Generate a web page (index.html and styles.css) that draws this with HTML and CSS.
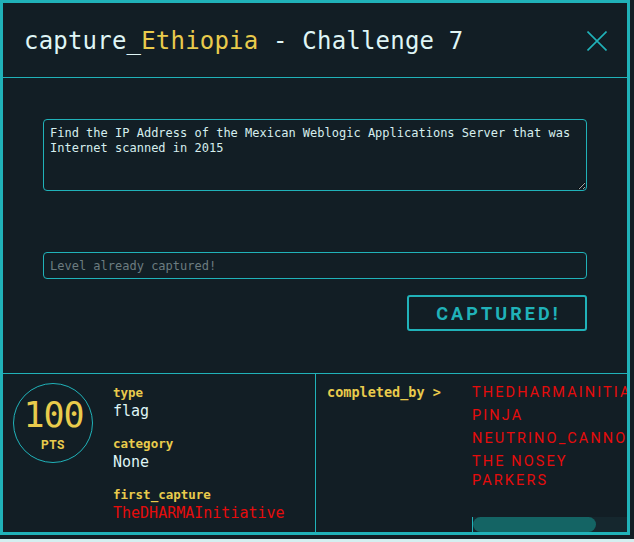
FILE: index.html
```html
<!DOCTYPE html>
<html lang="en">
<head>
    <meta charset="UTF-8">
    <meta name="viewport" content="width=device-width, initial-scale=1.0">
    <title>capture_Ethiopia - Challenge 7</title>
    <link rel="stylesheet" href="styles.css">
</head>
<body>

    <!-- Challenge modal -->
    <div class="modal">
        <div class="modal-header">
            <h1 class="modal-title">capture_<span class="hl">Ethiopia</span> - Challenge 7</h1>
            <button class="close-btn" aria-label="Close">
                <svg width="20" height="20" viewBox="0 0 20 20">
                    <path d="M0.5 0.5 L19.5 19.5 M19.5 0.5 L0.5 19.5" stroke="#20b2b9" stroke-width="1.6" fill="none"/>
                </svg>
            </button>
        </div>

        <div class="modal-body">
            <textarea class="description" readonly>Find the IP Address of the Mexican Weblogic Applications Server that was Internet scanned in 2015</textarea>
            <input class="flag-input" type="text" placeholder="Level already captured!" disabled>
            <div class="actions">
                <button class="capture-btn">CAPTURED!</button>
            </div>
        </div>

        <div class="modal-footer">
            <div class="details">
                <div class="points">
                    <span class="points-value">100</span>
                    <span class="points-label">PTS</span>
                </div>
                <div class="info">
                    <div class="info-group">
                        <div class="info-label">type</div>
                        <div class="info-value">flag</div>
                    </div>
                    <div class="info-group">
                        <div class="info-label">category</div>
                        <div class="info-value">None</div>
                    </div>
                    <div class="info-group">
                        <div class="info-label">first_capture</div>
                        <div class="info-value red">TheDHARMAInitiative</div>
                    </div>
                </div>
            </div>

            <div class="completed">
                <div class="completed-label">completed_by &gt;</div>
                <div class="completed-list">
                    <div class="names">
                        <div class="name">TheDHARMAInitiative</div>
                        <div class="name">Pinja</div>
                        <div class="name">neutrino_cannon</div>
                        <div class="name">The Nosey Parkers</div>
                    </div>
                    <div class="scroll-track">
                        <div class="scroll-thumb"></div>
                    </div>
                </div>
            </div>
        </div>
    </div>

    <div class="page-edge"></div>

</body>
</html>
```

FILE: styles.css
```css
/* Basic Reset */
* {
    margin: 0;
    padding: 0;
    box-sizing: border-box;
}

body {
    background: #121e25;
    font-family: 'DejaVu Sans Mono', monospace;
    color: #dff5f5;
    overflow: hidden;
}

/* Modal frame */
.modal {
    width: 630px;
    height: 535px;
    border: 3px solid #20b2b9;
    display: flex;
    flex-direction: column;
    overflow: hidden;
}

.modal-header {
    height: 75px;
    flex-shrink: 0;
    padding: 24px 20px 0 21px;
    border-bottom: 1px solid #20b2b9;
    display: flex;
    justify-content: space-between;
    align-items: flex-start;
}

.modal-title {
    font-size: 24px;
    font-weight: normal;
    line-height: 28px;
    letter-spacing: 0.2px;
    color: #dff5f5;
}

.hl {
    color: #e9cb4c;
}

.close-btn {
    background: none;
    border: none;
    width: 20px;
    height: 20px;
    margin-top: 4px;
    cursor: pointer;
}

.close-btn svg {
    display: block;
}

/* Body */
.modal-body {
    height: 295px;
    flex-shrink: 0;
    padding: 41px 40px 0 40px;
    display: flex;
    flex-direction: column;
}

.description {
    height: 72px;
    padding: 6px;
    background: transparent;
    border: 1px solid #20b2b9;
    border-radius: 4px;
    color: #d6eeee;
    font-family: 'DejaVu Sans Mono', monospace;
    font-size: 12px;
    line-height: 15px;
    resize: vertical;
}

.flag-input {
    height: 27px;
    margin-top: 61px;
    padding: 0 6px;
    background: transparent;
    border: 1px solid #20b2b9;
    border-radius: 4px;
    font-family: 'DejaVu Sans Mono', monospace;
    font-size: 12px;
}

.flag-input::placeholder {
    color: #6c7c80;
}

.actions {
    display: flex;
    justify-content: flex-end;
    margin-top: 16px;
}

.capture-btn {
    width: 180px;
    height: 36px;
    background: transparent;
    border: 2px solid #20b2b9;
    border-radius: 3px;
    color: #20b2b9;
    font-family: 'Roboto', 'Liberation Sans', sans-serif;
    font-size: 18px;
    font-weight: bold;
    letter-spacing: 3.1px;
    padding-left: 3px;
}

/* Footer */
.modal-footer {
    flex: 1;
    min-height: 0;
    display: flex;
    border-top: 1px solid #20b2b9;
}

.details {
    width: 313px;
    flex-shrink: 0;
    border-right: 1px solid #20b2b9;
    padding: 9px 0 0 10px;
    display: flex;
    align-items: flex-start;
}

.points {
    width: 80px;
    height: 80px;
    flex-shrink: 0;
    border: 1px solid #20b2b9;
    border-radius: 50%;
    padding-top: 15px;
    display: flex;
    flex-direction: column;
    align-items: center;
    color: #e9cb4c;
}

.points-value {
    font-size: 35px;
    line-height: 32px;
    letter-spacing: -1px;
    margin-right: -1px;
}

.points-label {
    font-family: 'Roboto', 'Liberation Sans', sans-serif;
    font-size: 12px;
    font-weight: bold;
    letter-spacing: 0.5px;
    line-height: 12px;
    margin-top: 8px;
}

.info {
    margin-left: 20px;
    padding-top: 1px;
}

.info-group {
    margin-bottom: 14px;
}

.info-label {
    color: #e9cb4c;
    font-size: 12.5px;
    line-height: 17px;
    font-weight: bold;
}

.info-value {
    font-size: 15px;
    line-height: 20px;
    color: #dff5f5;
}

.red {
    color: #e60c0c;
}

.completed {
    flex: 1;
    min-width: 0;
    display: flex;
}

.completed-label {
    width: 156px;
    flex-shrink: 0;
    padding: 10px 0 0 11px;
    color: #e9cb4c;
    font-size: 13.5px;
    line-height: 17px;
    font-weight: bold;
}

.completed-list {
    flex: 1;
    min-width: 0;
    display: flex;
    flex-direction: column;
    overflow: hidden;
}

.names {
    flex: 1;
    padding-top: 9px;
    overflow: hidden;
}

.name {
    font-family: 'Roboto', 'Liberation Sans', sans-serif;
    font-size: 14.5px;
    line-height: 19px;
    letter-spacing: 2.1px;
    text-transform: uppercase;
    color: #e60c0c;
    margin-bottom: 4px;
}

/* Horizontal scrollbar of the list */
.scroll-track {
    height: 15px;
    flex-shrink: 0;
    background: #15272e;
    border-left: 1px solid #20b2b9;
}

.scroll-thumb {
    width: 123px;
    height: 100%;
    background: #146464;
    border-radius: 8px;
}

.page-edge {
    height: 3px;
    margin-top: 4px;
    background: #d4eff0;
}
```
